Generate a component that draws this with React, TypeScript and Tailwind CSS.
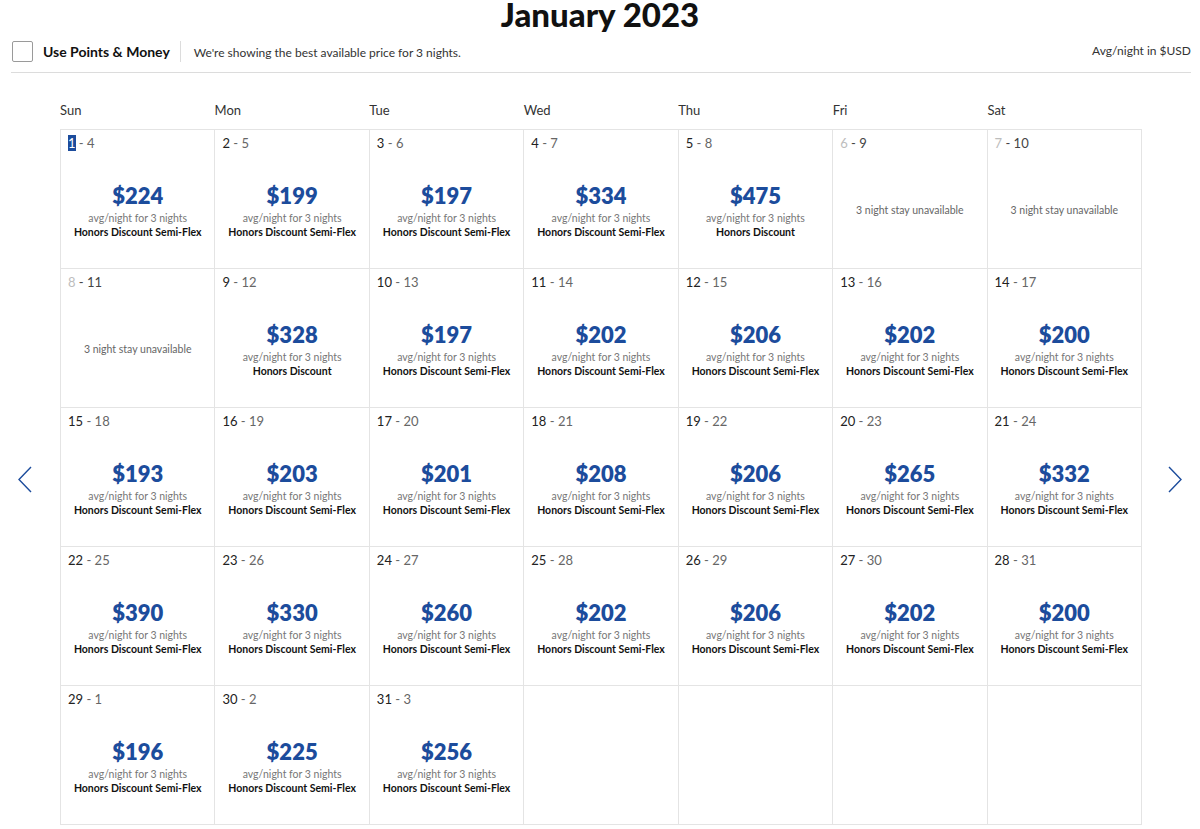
type Day = {
  start: string
  end: string
  price?: string
  rate?: string
  unavailable?: boolean
  empty?: boolean
}

const SF = "Honors Discount Semi-Flex"
const HD = "Honors Discount"

const days: Day[] = [
  { start: "1", end: "4", price: "$224", rate: SF },
  { start: "2", end: "5", price: "$199", rate: SF },
  { start: "3", end: "6", price: "$197", rate: SF },
  { start: "4", end: "7", price: "$334", rate: SF },
  { start: "5", end: "8", price: "$475", rate: HD },
  { start: "6", end: "9", unavailable: true },
  { start: "7", end: "10", unavailable: true },
  { start: "8", end: "11", unavailable: true },
  { start: "9", end: "12", price: "$328", rate: HD },
  { start: "10", end: "13", price: "$197", rate: SF },
  { start: "11", end: "14", price: "$202", rate: SF },
  { start: "12", end: "15", price: "$206", rate: SF },
  { start: "13", end: "16", price: "$202", rate: SF },
  { start: "14", end: "17", price: "$200", rate: SF },
  { start: "15", end: "18", price: "$193", rate: SF },
  { start: "16", end: "19", price: "$203", rate: SF },
  { start: "17", end: "20", price: "$201", rate: SF },
  { start: "18", end: "21", price: "$208", rate: SF },
  { start: "19", end: "22", price: "$206", rate: SF },
  { start: "20", end: "23", price: "$265", rate: SF },
  { start: "21", end: "24", price: "$332", rate: SF },
  { start: "22", end: "25", price: "$390", rate: SF },
  { start: "23", end: "26", price: "$330", rate: SF },
  { start: "24", end: "27", price: "$260", rate: SF },
  { start: "25", end: "28", price: "$202", rate: SF },
  { start: "26", end: "29", price: "$206", rate: SF },
  { start: "27", end: "30", price: "$202", rate: SF },
  { start: "28", end: "31", price: "$200", rate: SF },
  { start: "29", end: "1", price: "$196", rate: SF },
  { start: "30", end: "2", price: "$225", rate: SF },
  { start: "31", end: "3", price: "$256", rate: SF },
  { start: "", end: "", empty: true },
  { start: "", end: "", empty: true },
  { start: "", end: "", empty: true },
  { start: "", end: "", empty: true },
]

const weekdays = ["Sun", "Mon", "Tue", "Wed", "Thu", "Fri", "Sat"]

function Arrow({ dir }: { dir: "left" | "right" }) {
  return (
    <svg width="14" height="27" viewBox="0 0 14 27" fill="none" stroke="#1c4c9c" strokeWidth="1.4">
      {dir === "left" ? <polyline points="13,1 1,13.5 13,26" /> : <polyline points="1,1 13,13.5 1,26" />}
    </svg>
  )
}

function DayCell({ day, first }: { day: Day; first: boolean }) {
  if (day.empty) {
    return <div className="h-[139px] border-r border-b border-[#e4e4e4]" />
  }
  return (
    <div className="h-[139px] border-r border-b border-[#e4e4e4] flex flex-col">
      <div className="px-[7px] pt-[6px] text-[13px] leading-[15px]">
        <span className={first ? "bg-[#1c4c9c] text-white" : day.unavailable ? "text-[#bdbdbd]" : "text-[#222]"}>
          {day.start}
        </span>
        <span className={day.unavailable ? "text-[#444]" : "text-[#666]"}> - {day.end}</span>
      </div>
      <div className="flex-1 flex flex-col items-center justify-center text-center pt-[3px]">
        {day.unavailable ? (
          <div className="text-[10.5px] text-[#666]">3 night stay unavailable</div>
        ) : (
          <>
            <div className="text-[22px] leading-[26px] font-extrabold text-[#1c4c9c]">{day.price}</div>
            <div className="text-[10.5px] leading-[16px] mt-[1px] text-[#777]">avg/night for 3 nights</div>
            <div className="text-[10.5px] leading-[13px] font-bold text-[#111]">{day.rate}</div>
          </>
        )}
      </div>
    </div>
  )
}

export default function App() {
  return (
    <div className="w-[1200px] h-[829px] overflow-hidden bg-white text-[#222] font-['Lato',sans-serif]">
      {/* Title */}
      <h1 className="text-center text-[33px] leading-[30px] font-black -mt-[1px] text-[#111]">January 2023</h1>

      {/* Header */}
      <div className="ml-[11px] mr-[9px] mt-[11px] flex items-center pb-[10px] border-b border-[#dcdcdc]">
        <div className="w-[21px] h-[21px] ml-[1px] border border-[#9a9a9a] rounded-[2px]" />
        <span className="ml-[10px] text-[14px] font-bold text-[#111]">Use Points &amp; Money</span>
        <div className="ml-[10px] w-px h-[21px] bg-[#dcdcdc]" />
        <span className="ml-[13px] mt-[4px] text-[12px] text-[#333]">
          We're showing the best available price for 3 nights.
        </span>
        <span className="ml-auto text-[12px] text-[#333]">Avg/night in $USD</span>
      </div>

      {/* Calendar */}
      <div className="flex mt-[29px]">
        <div className="w-[60px] flex items-center justify-center pt-[27px]">
          <div className="-ml-[10px] mt-[4px]">
            <Arrow dir="left" />
          </div>
        </div>
        <div className="w-[1082px]">
          <div className="grid grid-cols-7 h-[27px] pt-[1px]">
            {weekdays.map((w) => (
              <div key={w} className="text-[13px] text-[#333] leading-[15px]">
                {w}
              </div>
            ))}
          </div>
          <div className="grid grid-cols-7 border-l border-t border-[#e4e4e4]">
            {days.map((d, i) => (
              <DayCell key={i} day={d} first={i === 0} />
            ))}
          </div>
        </div>
        <div className="w-[58px] flex items-center justify-center pt-[27px]">
          <div className="ml-[7px] mt-[4px]">
            <Arrow dir="right" />
          </div>
        </div>
      </div>
    </div>
  )
}
